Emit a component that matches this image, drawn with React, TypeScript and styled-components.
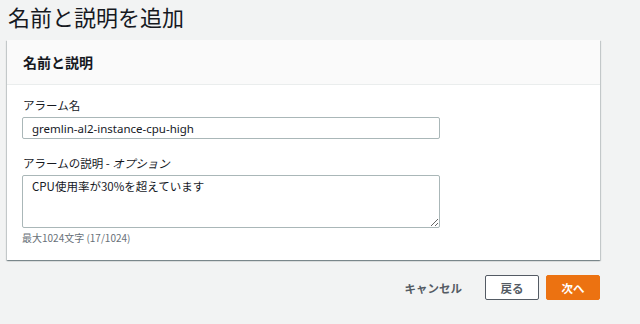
import styled, { createGlobalStyle } from "styled-components";

const GlobalStyle = createGlobalStyle`
  html, body {
    margin: 0;
    padding: 0;
    background: #f2f3f3;
    font-family: "Noto Sans CJK JP", "Noto Sans", sans-serif;
    color: #16191f;
  }
`;

const App = () => {
  return (
    <>
      <GlobalStyle />
      <Page>
        <Title>名前と説明を追加</Title>
        <Card>
          <CardHeader>名前と説明</CardHeader>
          <CardBody>
            <Field>
              <Label>アラーム名</Label>
              <TextInput type="text" defaultValue="gremlin-al2-instance-cpu-high" />
            </Field>
            <Field>
              <Label>
                アラームの説明 - <i>オプション</i>
              </Label>
              <TextArea defaultValue="CPU使用率が30%を超えています" />
              <Hint>最大1024文字 (17/1024)</Hint>
            </Field>
          </CardBody>
        </Card>
        <Actions>
          <Button variant="link">キャンセル</Button>
          <Button variant="normal">戻る</Button>
          <Button variant="primary">次へ</Button>
        </Actions>
      </Page>
    </>
  );
};

export default App;

const Page = styled.div`
  width: 593px;
  padding-left: 7px;
  display: flex;
  flex-direction: column;
`;

const Title = styled.h1`
  margin: 0 0 10px 1px;
  height: 30px;
  font-size: 22px;
  line-height: 32px;
  font-weight: 400;
  color: #16191f;
`;

const Card = styled.div`
  background: #fff;
  box-shadow: 0 1px 1px 0 rgba(0, 28, 36, 0.3), 1px 1px 1px 0 rgba(0, 28, 36, 0.15),
    -1px 1px 1px 0 rgba(0, 28, 36, 0.15);
`;

const CardHeader = styled.div`
  height: 44px;
  padding-left: 16px;
  display: flex;
  align-items: center;
  background: #fafafa;
  border-bottom: 1px solid #eaeded;
  font-size: 14px;
  font-weight: 700;
`;

const CardBody = styled.div`
  padding: 12px 16px 15px 15px;
  display: flex;
  flex-direction: column;
  gap: 16px;
`;

const Field = styled.div`
  display: flex;
  flex-direction: column;
  width: 418px;
`;

const Label = styled.label`
  font-size: 11.5px;
  line-height: 16px;
  margin: 0 0 4px 1px;
  color: #16191f;

  i {
    font-style: italic;
  }
`;

const TextInput = styled.input`
  box-sizing: border-box;
  height: 22px;
  width: 100%;
  padding: 0 9px;
  border: 1px solid #aab7b8;
  border-radius: 2px;
  font-family: "Noto Sans", "Noto Sans CJK JP", sans-serif;
  font-size: 11.5px;
  color: #16191f;
  outline: none;
`;

const TextArea = styled.textarea`
  box-sizing: border-box;
  height: 53px;
  width: 100%;
  padding: 2px 9px;
  border: 1px solid #aab7b8;
  border-radius: 2px;
  font-family: "Noto Sans CJK JP", "Noto Sans", sans-serif;
  font-size: 11.5px;
  line-height: 16px;
  color: #16191f;
  outline: none;
`;

const Hint = styled.div`
  margin-top: 3px;
  font-size: 10px;
  line-height: 14px;
  color: #687078;
`;

const Actions = styled.div`
  margin-top: 15px;
  display: flex;
  justify-content: flex-end;
  align-items: center;
  gap: 7px;
`;

const Button = styled.button<{ variant: "link" | "normal" | "primary" }>`
  box-sizing: border-box;
  height: 25px;
  min-width: 54px;
  padding: 0 12px;
  border-radius: 2px;
  font-family: "Noto Sans CJK JP", sans-serif;
  font-size: 11.5px;
  font-weight: 700;
  cursor: pointer;
  border: 1px solid
    ${(p) => (p.variant === "normal" ? "#545b64" : p.variant === "primary" ? "#ec7211" : "transparent")};
  background: ${(p) => (p.variant === "primary" ? "#ec7211" : p.variant === "normal" ? "#fff" : "transparent")};
  color: ${(p) => (p.variant === "primary" ? "#fff" : "#545b64")};
  margin-right: ${(p) => (p.variant === "link" ? "3px" : "0")};
`;
